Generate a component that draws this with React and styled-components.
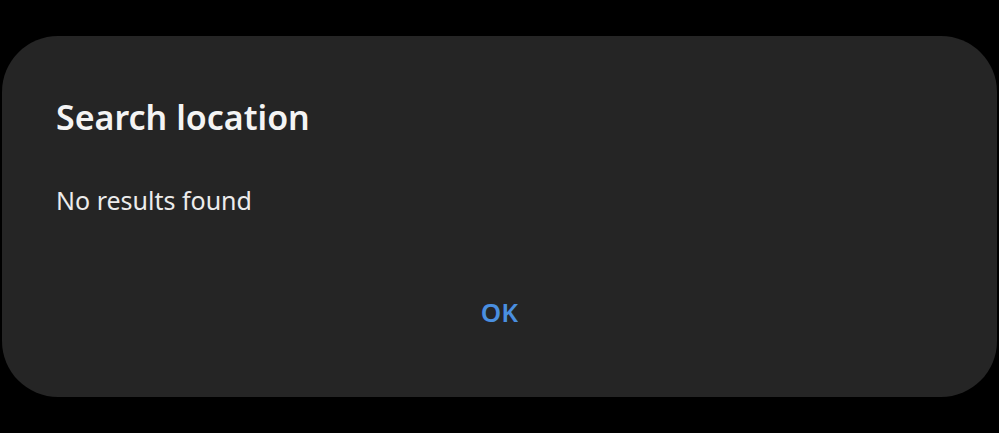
import styled, { createGlobalStyle } from "styled-components";

const GlobalStyle = createGlobalStyle`
    html, body {
        margin: 0;
        padding: 0;
        background: #000000;
        font-family: "Noto Sans", "Open Sans", sans-serif;
    }
`;

const Screen = styled.div`
    width: 999px;
    height: 433px;
    background: #000000;
    padding: 36px 2px 0 2px;
    box-sizing: border-box;
`;

const Dialog = styled.div`
    width: 995px;
    height: 361px;
    background: #252525;
    border-radius: 56px;
    box-sizing: border-box;
    padding: 64px 54px 0 54px;
    display: flex;
    flex-direction: column;
`;

const Title = styled.h1`
    margin: 0;
    color: #f4f4f4;
    font-size: 34px;
    font-weight: 600;
    line-height: 1;
    letter-spacing: 0px;
`;

const Message = styled.p`
    margin: 54px 0 0 0;
    color: #ececec;
    font-size: 25px;
    font-weight: 400;
    line-height: 1;
`;

const Actions = styled.div`
    display: flex;
    justify-content: center;
    margin-top: 86px;
`;

const ActionButton = styled.button`
    background: none;
    border: none;
    padding: 0;
    color: #4a8fe0;
    font-family: inherit;
    font-size: 26px;
    font-weight: 600;
    line-height: 1;
    cursor: pointer;
`;

export default function App() {
    return (
        <Screen>
            <GlobalStyle />
            <Dialog>
                <Title>Search location</Title>
                <Message>No results found</Message>
                <Actions>
                    <ActionButton>OK</ActionButton>
                </Actions>
            </Dialog>
        </Screen>
    );
}
